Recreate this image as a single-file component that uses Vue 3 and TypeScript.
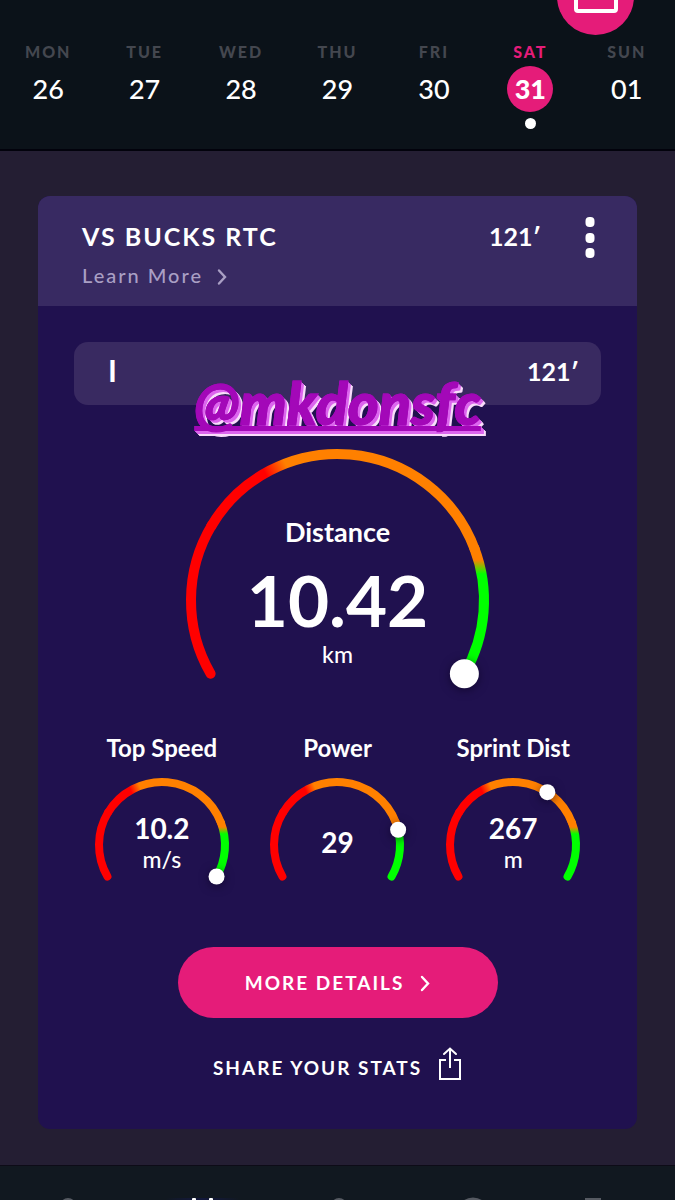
<script setup lang="ts">
interface Day {
  name: string
  date: string
  selected?: boolean
}

interface Gauge {
  label: string
  value: string
  unit?: string
  /** Degrees travelled along the 240 degree arc */
  knob: number
}

const days: Day[] = [
  { name: 'MON', date: '26' },
  { name: 'TUE', date: '27' },
  { name: 'WED', date: '28' },
  { name: 'THU', date: '29' },
  { name: 'FRI', date: '30' },
  { name: 'SAT', date: '31', selected: true },
  { name: 'SUN', date: '01' },
]

const distance: Gauge = { label: 'Distance', value: '10.42', unit: 'km', knob: 240 }

const gauges: Gauge[] = [
  { label: 'Top Speed', value: '10.2', unit: 'm/s', knob: 240 },
  { label: 'Power', value: '29', knob: 196 },
  { label: 'Sprint Dist', value: '267', unit: 'm', knob: 153 },
]

function point(center: number, radius: number, progress: number) {
  const angle = ((150 + progress) * Math.PI) / 180
  return {
    x: +(center + radius * Math.cos(angle)).toFixed(2),
    y: +(center + radius * Math.sin(angle)).toFixed(2),
  }
}

function arc(center: number, radius: number, from: number, to: number) {
  const a = point(center, radius, from)
  const b = point(center, radius, to)
  const large = to - from > 180 ? 1 : 0
  return `M${a.x} ${a.y}A${radius} ${radius} 0 ${large} 1 ${b.x} ${b.y}`
}
</script>

<template>
  <div class="screen">
    <header class="week">
      <button class="calendar" type="button" aria-label="Calendar">
        <svg width="44" height="32" viewBox="0 0 44 32" fill="none" stroke="#fff" stroke-width="4">
          <rect x="2" y="4" width="40" height="26" rx="2" />
          <path d="M2 12H42M12 0V8M32 0V8" />
        </svg>
      </button>
      <button v-for="day in days" :key="day.name" type="button" class="day" :class="{ selected: day.selected }">
        <span class="day-name">{{ day.name }}</span>
        <span class="day-date">{{ day.date }}</span>
        <span v-if="day.selected" class="day-dot"></span>
      </button>
    </header>

    <main class="content">
      <article class="card">
        <header class="card-head">
          <div class="match">
            <h1 class="title">VS BUCKS RTC</h1>
            <a class="learn" href="#">
              Learn More
              <svg width="10" height="16" viewBox="0 0 10 16" fill="none" stroke="currentColor" stroke-width="2.4" stroke-linecap="round">
                <path d="M2 2.500L8 9L2 15.500" />
              </svg>
            </a>
          </div>
          <span class="minutes">121′</span>
          <button class="more" type="button" aria-label="Options">
            <svg width="10" height="42" viewBox="0 0 10 42" fill="#fff">
              <rect x="0.500" y="0" width="9" height="10" rx="4" />
              <rect x="0.500" y="16" width="9" height="10" rx="4" />
              <rect x="0.500" y="31" width="9" height="10" rx="4" />
            </svg>
          </button>
        </header>

        <div class="card-body">
          <div class="period">
            <span class="period-name">I</span>
            <span class="minutes">121′</span>
            <span class="sticker">@mkdonsfc</span>
          </div>

          <section class="gauge gauge-large">
            <svg width="303" height="303" viewBox="0 0 303 303" fill="none" stroke-width="10">
              <defs>
                <linearGradient id="large-warm" gradientUnits="userSpaceOnUse" x1="78" y1="22" x2="98" y2="12">
                  <stop offset="0" stop-color="#ff0000" />
                  <stop offset="1" stop-color="#ff8000" />
                </linearGradient>
                <linearGradient id="large-cool" gradientUnits="userSpaceOnUse" x1="0" y1="111" x2="0" y2="125">
                  <stop offset="0" stop-color="#ff8000" />
                  <stop offset="1" stop-color="#00ff00" />
                </linearGradient>
              </defs>
              <path :d="arc(151.5, 146.5, 60, 190)" stroke="url(#large-warm)" />
              <path :d="arc(151.5, 146.5, 0, 61)" stroke="#ff0000" stroke-linecap="round" />
              <path :d="arc(151.5, 146.5, 189, 240)" stroke="url(#large-cool)" stroke-linecap="round" />
              <circle class="knob" :cx="point(151.5, 146.5, distance.knob).x" :cy="point(151.5, 146.5, distance.knob).y" r="14.5" fill="#fff" />
            </svg>
            <div class="reading">
              <h2 class="large-label">{{ distance.label }}</h2>
              <strong class="large-value">{{ distance.value }}</strong>
              <span class="unit">{{ distance.unit }}</span>
            </div>
          </section>

          <div class="gauges">
            <section v-for="(g, i) in gauges" :key="g.label" class="stat">
              <h2 class="small-label">{{ g.label }}</h2>
              <div class="gauge">
                <svg width="134" height="134" viewBox="0 0 134 134" fill="none" stroke-width="8">
                  <defs>
                    <linearGradient :id="`warm-${i}`" gradientUnits="userSpaceOnUse" x1="35" y1="11" x2="44" y2="7">
                      <stop offset="0" stop-color="#ff0000" />
                      <stop offset="1" stop-color="#ff8000" />
                    </linearGradient>
                    <linearGradient :id="`cool-${i}`" gradientUnits="userSpaceOnUse" x1="0" y1="49" x2="0" y2="56">
                      <stop offset="0" stop-color="#ff8000" />
                      <stop offset="1" stop-color="#00ff00" />
                    </linearGradient>
                  </defs>
                  <path :d="arc(67, 63, 60, 190)" :stroke="`url(#warm-${i})`" />
                  <path :d="arc(67, 63, 0, 61)" stroke="#ff0000" stroke-linecap="round" />
                  <path :d="arc(67, 63, 189, 240)" :stroke="`url(#cool-${i})`" stroke-linecap="round" />
                  <circle class="knob" :cx="point(67, 63, g.knob).x" :cy="point(67, 63, g.knob).y" r="8" fill="#fff" />
                </svg>
                <div class="reading">
                  <strong class="small-value">{{ g.value }}</strong>
                  <span v-if="g.unit" class="unit">{{ g.unit }}</span>
                </div>
              </div>
            </section>
          </div>

          <button class="details" type="button">
            MORE DETAILS
            <svg width="10" height="16" viewBox="0 0 10 16" fill="none" stroke="#fff" stroke-width="2.4" stroke-linecap="round">
              <path d="M2 2L8 8.500L2 15" />
            </svg>
          </button>
          <button class="share" type="button">
            SHARE YOUR STATS
            <svg width="24" height="34" viewBox="0 0 24 34" fill="none" stroke="#fff" stroke-width="2">
              <path d="M8 13H2V32H22V13H16" />
              <path d="M12 21V2" />
              <path d="M6 7L12 1.500L18 7" stroke-linecap="round" />
            </svg>
          </button>
        </div>
      </article>
    </main>

    <nav class="tabs">
      <a href="#" aria-label="Profile">
        <svg width="32" height="32" viewBox="0 0 32 32" fill="#565a62"><circle cx="16" cy="8" r="8" /><path d="M2 32a14 14 0 0 1 28 0z" /></svg>
      </a>
      <a class="active" href="#" aria-label="Sessions">
        <svg width="32" height="32" viewBox="0 0 32 32" fill="#fff"><rect x="5" y="0" width="4" height="32" rx="1" /><rect x="22" y="0" width="4" height="32" rx="1" /><rect x="5" y="14" width="20" height="4" /></svg>
      </a>
      <a href="#" aria-label="Team">
        <svg width="32" height="32" viewBox="0 0 32 32" fill="#565a62"><circle cx="17" cy="8" r="8" /><path d="M3 32a14 14 0 0 1 28 0z" /></svg>
      </a>
      <a href="#" aria-label="Progress">
        <svg width="32" height="32" viewBox="0 0 32 32" fill="none" stroke="#565a62" stroke-width="3"><circle cx="16" cy="16" r="15" /></svg>
      </a>
      <a href="#" aria-label="Awards">
        <svg width="62" height="32" viewBox="0 0 62 32" fill="#565a62"><path d="M8 0H24V20H8z" /></svg>
      </a>
    </nav>
  </div>
</template>

<style>
body {
  margin: 0;
  background: #241e33;
}
</style>

<style scoped>
.screen {
  display: flex;
  flex-direction: column;
  height: 100vh;
  overflow: hidden;
  background: #241e33;
  color: #fff;
  font-family: Lato, "Noto Sans", sans-serif;
}

button {
  padding: 0;
  border: 0;
  background: none;
  color: inherit;
  font: inherit;
  cursor: pointer;
}

svg {
  display: block;
  flex: none;
  overflow: visible;
}

h1,
h2 {
  margin: 0;
  font-weight: 700;
}

.week {
  position: relative;
  display: grid;
  flex: none;
  grid-template-columns: repeat(7, 1fr);
  padding: 40px 0 20px;
  border-bottom: 2px solid #02020c;
  background: #0b1219;
}

.calendar {
  position: absolute;
  top: -42px;
  right: 41px;
  display: grid;
  width: 77px;
  height: 77px;
  place-items: center;
  border-radius: 50%;
  background: #e51c79;
}

.day {
  display: flex;
  flex-direction: column;
  align-items: center;
}

.day-name {
  color: #44474f;
  font-size: 16px;
  font-weight: 900;
  line-height: 24px;
  letter-spacing: 2px;
}

.day-date {
  width: 46px;
  margin-top: 2px;
  border-radius: 50%;
  font-size: 27px;
  font-weight: 500;
  line-height: 46px;
}

.selected .day-name {
  color: #e51c79;
}

.selected .day-date {
  background: #e51c79;
  font-weight: 900;
}

.day-dot {
  width: 11px;
  height: 11px;
  margin-top: 6px;
  border-radius: 50%;
  background: #fff;
}

.content {
  flex: none;
  padding: 45px 38px 36px;
}

.card {
  overflow: hidden;
  border-radius: 12px;
  background: #20114f;
}

.card-head {
  display: flex;
  align-items: flex-start;
  padding: 21px 42px 15px 44px;
  background: #382a62;
}

.match {
  flex: 1;
}

.title {
  font-size: 25px;
  line-height: 38px;
  letter-spacing: 2px;
}

.learn {
  display: flex;
  align-items: center;
  gap: 14px;
  margin-top: 5px;
  color: #a99fc4;
  font-size: 20px;
  font-weight: 500;
  line-height: 31px;
  letter-spacing: 2px;
  text-decoration: none;
}

.minutes {
  font-size: 25px;
  font-weight: 700;
  line-height: 38px;
}

.more {
  margin-left: 44px;
}

.card-body {
  display: flex;
  flex-direction: column;
  align-items: center;
  padding: 36px 36px 42px;
}

.period {
  position: relative;
  display: flex;
  box-sizing: border-box;
  width: 100%;
  align-items: flex-start;
  justify-content: space-between;
  padding: 10px 22px 15px 34px;
  border-radius: 14px;
  background: #392a61;
}

.period-name {
  font-size: 30px;
  font-weight: 700;
  line-height: 36px;
}

.sticker {
  position: absolute;
  top: 30px;
  left: 50%;
  color: #a308b8;
  font-size: 59px;
  font-style: italic;
  font-weight: 900;
  line-height: 62px;
  text-decoration: underline;
  text-decoration-skip-ink: none;
  text-decoration-thickness: 5px;
  text-underline-offset: 1px;
  text-shadow: 1px 1px #dc66ee, 2px 2px #dc66ee, 3px 3px #dc66ee, 4px 4px #f9dcfb, 5px 5px #f9dcfb;
  transform: translateX(-50%);
  -webkit-text-stroke: 1px #a308b8;
}

.gauge {
  display: grid;
  justify-items: center;
}

.gauge > * {
  grid-area: 1 / 1;
}

.gauge-large {
  margin-top: 44px;
}

.knob {
  filter: drop-shadow(0 2px 5px rgba(8, 2, 30, 0.6));
}

.reading {
  display: flex;
  z-index: 1;
  flex-direction: column;
  align-items: center;
  justify-content: center;
  padding-bottom: 6px;
}

.gauge-large .reading {
  justify-content: flex-start;
  padding-top: 65px;
}

.large-label {
  font-size: 27px;
  line-height: 36px;
}

.large-value {
  margin-top: 8px;
  font-size: 71px;
  line-height: 84px;
}

.unit {
  font-size: 23px;
  font-weight: 500;
  line-height: 28px;
}

.gauge-large .unit {
  margin-top: -2px;
}

.gauges {
  display: grid;
  width: 100%;
  grid-template-columns: repeat(3, 1fr);
  margin-top: -20px;
}

.stat {
  text-align: center;
}

.small-label {
  margin-bottom: 14px;
  font-size: 24px;
  line-height: 32px;
}

.small-value {
  font-size: 28px;
  line-height: 34px;
}

.details {
  display: flex;
  width: 320px;
  max-width: 100%;
  height: 71px;
  align-items: center;
  justify-content: center;
  gap: 16px;
  margin-top: 35px;
  border-radius: 36px;
  background: #e51c79;
  font-size: 19px;
  font-weight: 700;
  letter-spacing: 2px;
}

.share {
  display: flex;
  align-items: flex-start;
  gap: 16px;
  margin-top: 29px;
  font-size: 19px;
  font-weight: 700;
  line-height: 42px;
  letter-spacing: 2px;
}

.card-body > .share {
  margin-bottom: -2px;
}

.tabs {
  display: grid;
  flex: 1;
  min-height: 0;
  grid-template-columns: repeat(5, 1fr);
  align-items: start;
  overflow: hidden;
  padding-top: 32px;
  border-top: 1px solid #0d0b17;
  background: #111820;
}

.tabs a {
  display: grid;
  justify-items: center;
}

.active {
  background: radial-gradient(circle at center, #14184a 0, #111820 40px);
}
</style>
